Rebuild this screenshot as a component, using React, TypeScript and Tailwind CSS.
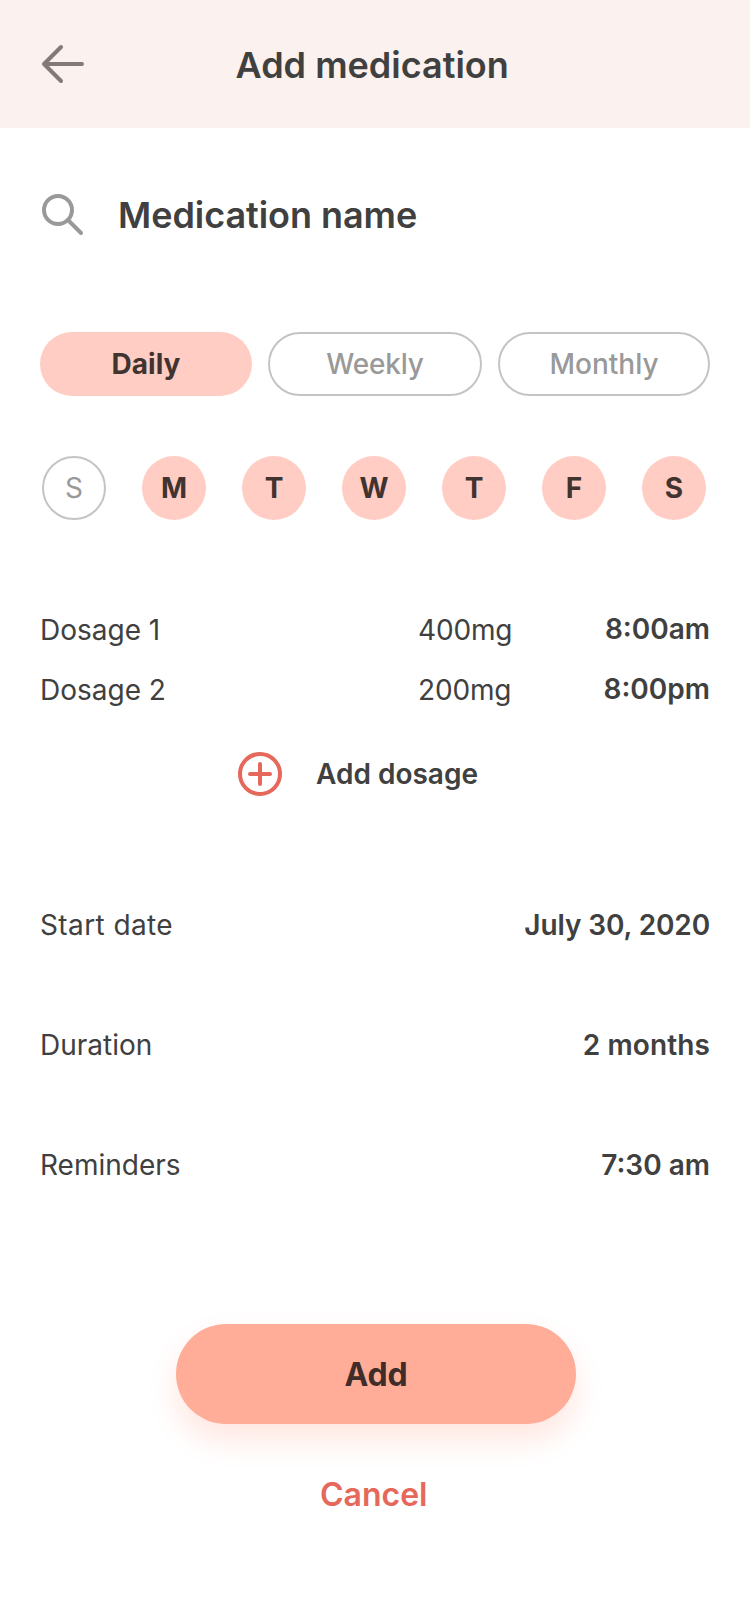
const days = [["S", false], ["M", true], ["T", true], ["W", true], ["T", true], ["F", true], ["S", true]] as const;
const doses = [["Dosage 1", "400mg", "8:00am"], ["Dosage 2", "200mg", "8:00pm"]];
const details = [
  { label: "Start date", value: "July 30, 2020", labelStyle: "tracking-[0.4px]", valueStyle: "tracking-[-0.12px]" },
  { label: "Duration", value: "2 months", labelStyle: "", valueStyle: "tracking-[0.1px]" },
  { label: "Reminders", value: "7:30 am", labelStyle: "", valueStyle: "" },
];

export default function App() {
  return (
    <main className="flex h-[1624px] w-[750px] flex-col bg-white font-['Inter',sans-serif] text-[28px] leading-[34px] text-[#404040]">
      <header className="flex h-32 shrink-0 items-center bg-[#fbf1ee] pl-10 pt-0.5">
        <button aria-label="Back">
          <svg width="46" height="42" viewBox="0 0 46 42" fill="none" stroke="#827a78" strokeWidth="4" strokeLinecap="round" strokeLinejoin="round">
            <path d="M42 20H4M21 3 4 20l17 17" />
          </svg>
        </button>
        <h1 className="ml-[149.5px] text-[36px] font-semibold leading-[44px]">Add medication</h1>
      </header>

      <label className="mt-[65px] flex h-[44px] items-center pl-10">
        <svg width="44" height="44" viewBox="0 0 44 44" fill="none" stroke="#999" strokeWidth="4" strokeLinecap="round">
          <circle cx="18" cy="17" r="14" />
          <path d="m28 27 13 13" />
        </svg>
        <span className="ml-[34px] text-[36px] font-semibold leading-[44px] tracking-[-0.05px]">Medication name</span>
      </label>

      <div className="mt-[95px] flex gap-4 px-10">
        <button className="h-16 w-[212px] rounded-full bg-[#ffcdc3] font-bold text-[#403330]">Daily</button>
        <button className="h-16 w-[214px] rounded-full border-2 border-[#c4c4c4] font-medium tracking-[-0.2px] text-[#999]">Weekly</button>
        <button className="h-16 w-[212px] rounded-full border-2 border-[#c4c4c4] font-medium text-[#999]">Monthly</button>
      </div>

      <div className="mt-[60px] flex justify-between pl-[42px] pr-11">
        {days.map(([day, on], i) => (
          <button key={i} className={on ? "size-16 rounded-full bg-[#ffcdc3] font-bold text-[#403330]" : "size-16 rounded-full border-2 border-[#c4c4c4] text-[#999]"}>{day}</button>
        ))}
      </div>

      <div className="mt-[80px] px-10">
        {doses.map(([name, amount, time]) => (
          <div key={name} className="flex h-[60px] items-center">
            <span className="w-[378px]">{name}</span>
            <span className="tracking-[-0.15px]">{amount}</span>
            <span className="ml-auto pb-0.5 font-semibold">{time}</span>
          </div>
        ))}
      </div>

      <button className="mt-[32px] flex h-[44px] items-center pl-[238px] font-semibold">
        <svg width="44" height="44" viewBox="0 0 44 44" fill="none" stroke="#e5685b" strokeWidth="4" strokeLinecap="round">
          <circle cx="22" cy="22" r="20" />
          <path d="M22 12v20M12 22h20" />
        </svg>
        <span className="ml-[34px]">Add dosage</span>
      </button>

      <div className="mt-[69px] px-10">
        {details.map(({ label, value, labelStyle, valueStyle }) => (
          <div key={label} className="flex h-[120px] items-center justify-between">
            <span className={labelStyle}>{label}</span>
            <span className={`font-semibold ${valueStyle}`}>{value}</span>
          </div>
        ))}
      </div>

      <button className="ml-[176px] mt-[99px] h-[100px] w-[400px] rounded-full bg-[#ffad99] pt-0.5 text-[32px] font-bold tracking-[-0.2px] text-[#402c28] shadow-[0_16px_32px_#ffe6e0]">Add</button>
      <button className="ml-[320px] mt-[51px] self-start text-[32px] font-semibold leading-[40px] text-[#e5685b]">Cancel</button>
    </main>
  );
}
